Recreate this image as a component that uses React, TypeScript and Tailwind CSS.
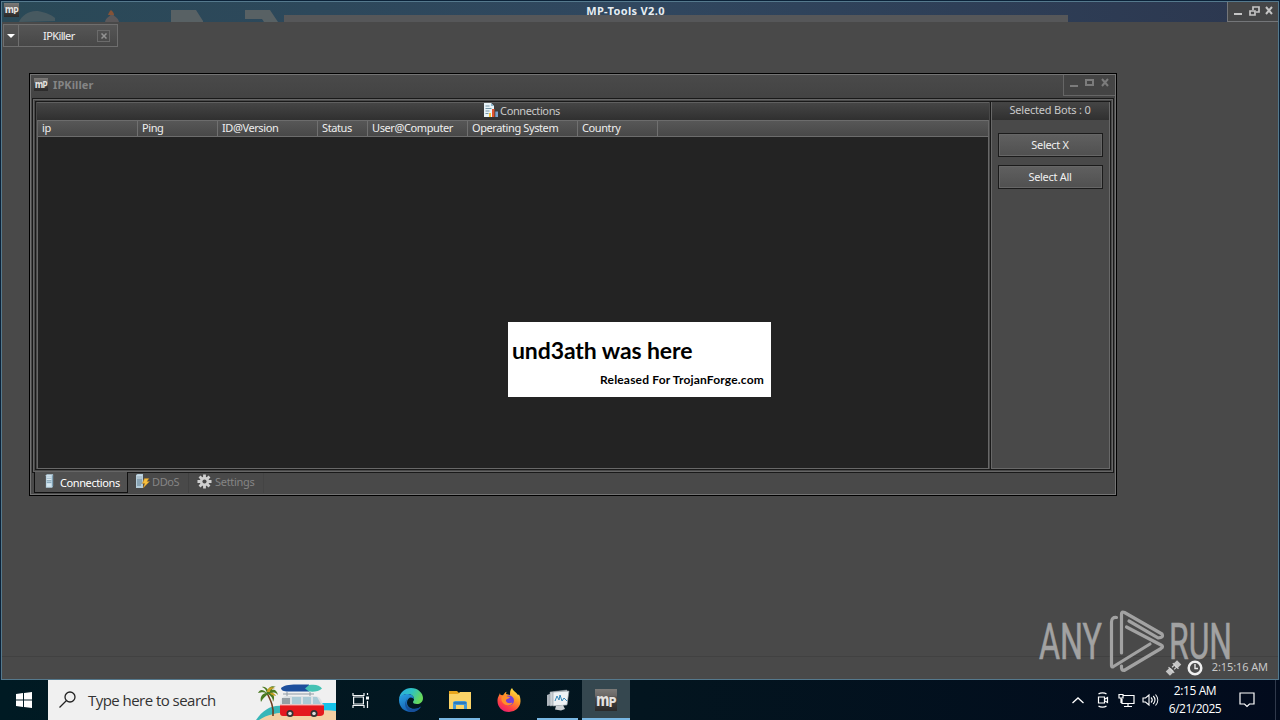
import React from "react";
import { clsx } from "clsx";

// Types
interface IconProps {
  className?: string;
}

interface Column {
  label: string;
  width: string;
}

const columns: Column[] = [
  { label: "ip", width: "w-[100px]" },
  { label: "Ping", width: "w-[80px]" },
  { label: "ID@Version", width: "w-[100px]" },
  { label: "Status", width: "w-[50px]" },
  { label: "User@Computer", width: "w-[100px]" },
  { label: "Operating System", width: "w-[110px]" },
  { label: "Country", width: "w-[80px]" },
];

// Icons
const MpIcon: React.FC<IconProps> = ({ className }) => (
  <svg viewBox="0 0 22 22" className={className} preserveAspectRatio="none">
    <defs>
      <linearGradient id="mp-bg" x1="0" y1="0" x2="0" y2="1">
        <stop offset="0" stopColor="#7c7a78" />
        <stop offset="0.3" stopColor="#6b6866" />
        <stop offset="0.42" stopColor="#464443" />
        <stop offset="1" stopColor="#2b2a2a" />
      </linearGradient>
    </defs>
    <rect width="22" height="22" fill="url(#mp-bg)" />
    <g fill="#e4e2e0" fontFamily="DejaVu Sans, sans-serif" fontWeight="bold">
      <text x="1" y="16.500" fontSize="17" textLength="13.500" lengthAdjust="spacingAndGlyphs">m</text>
      <text x="13.500" y="17.500" fontSize="13.500" textLength="8" lengthAdjust="spacingAndGlyphs">P</text>
    </g>
  </svg>
);

const ServerIcon: React.FC<IconProps> = ({ className }) => (
  <svg viewBox="0 0 10 15" className={className}>
    <path d="M1 1 2 0h7v13l-1 2H1z" fill="#b9d3e2" />
    <path d="M8 1h1v12l-1 1z" fill="#6f93a8" />
    <path d="M2 3h5M2 5h5M2 7h5M2 9h5" stroke="#6f8fa3" strokeWidth="0.8" />
    <path d="M2 2h5M2 4h5M2 6h5M2 11h5M2 13h5" stroke="#f4fbff" strokeWidth="0.9" />
  </svg>
);

const ChartIcon: React.FC<IconProps> = ({ className }) => (
  <svg viewBox="0 0 14 15" className={className}>
    <path d="M0 0h7l3 3v11H0z" fill="#e8f2f7" />
    <path d="M7 0v3h3z" fill="#8fb8cf" />
    <path d="M1.500 3h4M1.500 5.500h6M1.500 8h4M1.500 10.500h3" stroke="#7495a6" />
    <path d="M5 10h2v4H5z" fill="#f5c33b" />
    <path d="M8 6h2.500v8H8z" fill="#e0542f" />
    <path d="M11.300 8.500H14V14h-2.700z" fill="#7ba4cf" />
  </svg>
);

const DdosIcon: React.FC<IconProps> = ({ className }) => (
  <svg viewBox="0 0 15 15" className={className}>
    <path d="M1 1 2.500 0H8v14H1z" fill="#b3cbd9" />
    <path d="M2 3h5M2 5h5M2 7h5M2 9h5M2 11h4" stroke="#49677b" strokeWidth="0.8" />
    <path d="M2 2h5M2 4h5" stroke="#f0f8fc" strokeWidth="0.7" />
    <path d="M9.500 4.500h4.300l-1.800 3h2.500L8.200 14l1.500-4.500H7.300z" fill="#f7bf3c" stroke="#b88025" strokeWidth="0.5" />
  </svg>
);

const GearIcon: React.FC<IconProps> = ({ className }) => (
  <svg viewBox="0 0 16 16" className={className}>
    <g stroke="#cfcfcf" strokeWidth="3">
      <path d="M8 .5v15M.5 8h15M2.700 2.700l10.600 10.600M13.300 2.700 2.700 13.300" />
    </g>
    <circle cx="8" cy="8" r="5" fill="#cfcfcf" />
    <circle cx="8" cy="8" r="2.200" fill="#474747" />
  </svg>
);

const BeachVan: React.FC<IconProps> = ({ className }) => (
  <svg viewBox="0 0 80 40" className={className}>
    <path d="M0 40c7-10 15-15 26-14v14z" fill="#37b6b8" />
    <path d="M66 23h14v9H66z" fill="#16c3ea" />
    <path d="M3 40c10-7 26-9 44-7 12-2 22-4 33-2v9z" fill="#f3cfa3" />
    <path d="M11 13c4 8 7 14 6 23" stroke="#6d3b1d" strokeWidth="1.600" fill="none" />
    <path
      d="M11 13C7 9 4 9 2 13c4-1 6-1 8 0-5 1-6 5-5 9 2-4 5-6 7-8 3 2 5 4 5 8 2-4 1-7-1-9 3-1 4 0 6 2-1-4-3-6-6-5 1-3 2-3 4-3-4-2-7 0-8 3-1-2-4-4-6-3 3 1 4 3 5 6z"
      fill="#4b7a22"
    />
    <path d="M11 12c0-4 4-6 8-4-4 1-5 2-5 4zM14 13c3-1 5 1 6 3-3-1-5-1-6-3z" fill="#c7a124" />
    <path d="M25 8c3-3 10-4 20-3.500h8v7H32c-4 0-7-1-7-3.500z" fill="#1d4f9c" />
    <path d="M53 5c6-1 11 0 13 3.500-3 3-8 3.500-13 3l-4-3z" fill="#45c2b4" />
    <path d="M27 14h31M31 12v4M54 12v4" stroke="#8e9aa5" />
    <path d="M24 26c0-6 1-9 6-10h28c6 0 8 4 9 10v3H24z" fill="#dce2e5" />
    <path d="M26 18h8v6h-8zM36 17h9v7h-9zM47 17h8v7h-8zM57 17h4l4 7h-8z" fill="#a9cad6" />
    <path d="M26 18h8v6h-8z" fill="#949ea5" />
    <path d="M24 25h44v8c0 2-2 3-4 3H27c-2 0-3-1-3-3z" fill="#e4181e" />
    <path d="M24 25h44" stroke="#f6a5a1" />
    <circle cx="34" cy="33.500" r="3.500" fill="#333" />
    <circle cx="34" cy="33.500" r="1.800" fill="#ddd" />
    <circle cx="58" cy="33.500" r="3.500" fill="#333" />
    <circle cx="58" cy="33.500" r="1.800" fill="#ddd" />
  </svg>
);

const EdgeIcon: React.FC<IconProps> = ({ className }) => (
  <svg viewBox="0 0 24 24" className={className}>
    <defs>
      <linearGradient id="edge-top" x1="0" y1="0" x2="1" y2="0.4">
        <stop offset="0" stopColor="#29a9e8" />
        <stop offset="0.55" stopColor="#2fc3c0" />
        <stop offset="1" stopColor="#66d95b" />
      </linearGradient>
      <linearGradient id="edge-low" x1="0" y1="0" x2="0.6" y2="1">
        <stop offset="0" stopColor="#2ba4e4" />
        <stop offset="1" stopColor="#1057ac" />
      </linearGradient>
    </defs>
    <path d="M0 11C1 4 6 0 12 0c7 0 12 5 12 10 0 4-3 6-6 6-3 0-4-1-4-2s1-1 1-3c0-3-3-5-6-5-5 0-8 3-9 5z" fill="url(#edge-top)" />
    <path d="M0 12c0-4 4-6 9-6 4 0 6 3 6 5-1-1-2-1.500-3-1.500-2 0-4 2-4 5 0 5 5 7 9 6 2 0 3-1 5-2-2 3-5 5.500-10 5.500C5 24 0 19 0 12z" fill="url(#edge-low)" />
    <path d="M9 10c-3 4-2 9 3 11 4 1.500 8-1 10-2.500-2 3.500-5 5.500-10 5.500-6-2-8-9-3-14z" fill="#174f99" />
  </svg>
);

const ExplorerIcon: React.FC<IconProps> = ({ className }) => (
  <svg viewBox="0 0 22 20" className={className}>
    <path d="M0 1h8l2 2h12v5H0z" fill="#e9a61d" />
    <path d="M0 4h9l2-2h11v17H0z" fill="#fbd367" />
    <path d="M4 19v-7l2-1h10l2 1v7h-3v-4H7v4z" fill="#4598d4" />
    <path d="M5 12h12v2H5z" fill="#2b7ac0" />
  </svg>
);

const FirefoxIcon: React.FC<IconProps> = ({ className }) => (
  <svg viewBox="0 0 24 24" className={className}>
    <defs>
      <linearGradient id="fox" x1="0.8" y1="0" x2="0.25" y2="1">
        <stop offset="0" stopColor="#fff04a" />
        <stop offset="0.4" stopColor="#ff9926" />
        <stop offset="0.75" stopColor="#ff4045" />
        <stop offset="1" stopColor="#e81b73" />
      </linearGradient>
    </defs>
    <path d="M3 5c0 1 .5 2 1 2l2 .2c1-1.500 2-3 3.500-3.500L9 6l4 1c0-3 0-5 2-7 1 3 4 4 6 7l1-.5c1.500 3 1.500 5 1.500 7A11.500 11 0 0 1 12 24C5 24 .5 19 .5 13 .5 9 2 8 3 5z" fill="url(#fox)" />
    <circle cx="12" cy="12.500" r="5" fill="#7540d8" />
    <path d="M5 8c2-1 4-.5 5 .5 1 0 2 0 3 1-1 1-2 1-3 1.500-2 1-1 3 1 4 2 .5 3-.5 4.500 0-2 3-7 3-9.500 0C4 13 4 10 5 8z" fill="#ff8f2a" />
  </svg>
);

const MonitorIcon: React.FC<IconProps> = ({ className }) => (
  <svg viewBox="0 0 24 22" className={className}>
    <path d="m1 6 5-2 2 12-7 1z" fill="#aeb5bc" />
    <path d="m4 3 17-2v14L4 17z" fill="#ccd2d7" stroke="#8c959c" strokeWidth="0.5" />
    <path d="m7 3 16-1-2 14-14 1z" fill="#eef2f5" stroke="#8c959c" strokeWidth="0.6" />
    <path d="m9 12 2-5 2 4 1-5 2 6 2-3 3 3" fill="none" stroke="#3687b8" />
    <path d="m10 17 7-1 2 4-4 1.500-6-1z" fill="#cbd0d4" />
  </svg>
);

const TaskViewIcon: React.FC<IconProps> = ({ className }) => (
  <svg viewBox="0 0 17 17" className={className} fill="none" stroke="#f3f6f7" strokeWidth="1.200">
    <path d="M1 1v2.500h11V1M1 16v-2.500h11V16M1.600 5h9.800v7H1.600zM15.500 1v2M15.500 9v7" />
    <path d="M14 4.500h3v3h-3z" fill="#f3f6f7" stroke="none" />
  </svg>
);

const AnyRunLogo: React.FC<IconProps> = ({ className }) => (
  <svg viewBox="0 0 196 70" className={className}>
    <g fill="#a2a2a2" stroke="#a2a2a2" strokeWidth="0.6" fontFamily="Roboto, sans-serif" fontSize="50">
      <text x="1" y="51.500" textLength="63" lengthAdjust="spacingAndGlyphs">ANY</text>
      <text x="131" y="51.500" textLength="63" lengthAdjust="spacingAndGlyphs">RUN</text>
    </g>
    <g fill="none" stroke="#a2a2a2" strokeWidth="3.200" strokeLinecap="round" strokeLinejoin="round">
      <path d="M78.500 10.500Q73.500 10 73.500 15v43.500q0 2 2 1L112 37" />
      <path d="M83.500 46V7q0-3 3-1.500L124 27q2 4-4 3.800L91 14" />
      <path d="M88.500 20 123 38q3 1.500 0 3.500L86 63.500q-3 0-2.500-4.500" />
    </g>
  </svg>
);

// Window caption buttons
const CaptionButtons: React.FC<{ restore?: boolean; color: string }> = ({ restore, color }) => (
  <svg viewBox="0 0 40 12" className={clsx("h-3 w-10", color)} fill="none" stroke="currentColor" strokeWidth="2">
    <path d="M0 9h8M32 2l6 7M38 2l-6 7" />
    {restore ? (
      <path d="M16 6h5v4h-5zM19 5V2h6v5h-3" strokeWidth="1.700" />
    ) : (
      <path d="M16 3h7v5h-7z" />
    )}
  </svg>
);

const TitleBar: React.FC = () => (
  <header className="relative flex h-5 shrink-0 justify-between overflow-hidden bg-linear-to-r from-[#2a4957] via-[#30475f] to-[#2c374f]">
    {/* Desktop shapes that show through the glass */}
    <svg viewBox="0 0 1276 20" className="absolute inset-0 h-full w-full">
      <path d="M17 20c2-6 10-12 19-11 9 2 14 4 17 7v3z" fill="#475960" />
      <path d="M103 20c1-5 5-5 6-8h2c1 3 5 3 6 8z" fill="#5b585a" />
      <path d="M106 13c1-3 2-4 3-5 2 2 3 3 3 5z" fill="#855337" />
      <path d="M169 8h25l7 11v1h-32zM243 8h25l8 12h-14l-2-3h-17z" fill="#586164" />
      <path d="M282 13h784v7H282z" fill="#565759" />
    </svg>
    <MpIcon className="relative ml-[2px] mt-px h-[14px] w-[15px]" />
    <h1 className="relative ml-[5px] mt-px text-[11px] leading-4 font-bold tracking-[0.35px] text-[#e8edf0]">MP-Tools V2.0</h1>
    <div className="relative flex h-5 w-[51px] justify-end border-b border-l border-[#747679] bg-[#454647] pt-[3px] pr-1">
      <CaptionButtons restore color="text-[#c5c5c5]" />
    </div>
  </header>
);

const TabStrip: React.FC = () => (
  <nav className="ml-px mt-[2px] flex h-[23px] w-[115px] shrink-0 border border-[#6e6e6e] bg-linear-to-b from-[#565656] to-[#474747]">
    <div className="flex w-[15px] items-center justify-center border-r border-[#6e6e6e]">
      <svg viewBox="0 0 8 4" className="h-1 w-2"><path d="M0 0h8L4 4z" fill="#fff" /></svg>
    </div>
    <span className="ml-6 text-[11px] leading-[22px] tracking-[-0.6px] text-[#f0f0f0]">IPKiller</span>
    <span className="ml-auto mr-[7px] mt-[5px] flex h-3 w-[13px] items-center justify-center border border-[#6b6b6b]">
      <svg viewBox="0 0 6 6" className="h-[6px] w-[6px]"><path d="m.5.5 5 5m0-5-5 5" stroke="#949494" strokeWidth="1.500" /></svg>
    </span>
  </nav>
);

const PanelButton: React.FC<{ children: React.ReactNode }> = ({ children }) => (
  <button className="h-6 w-[105px] border border-[#1b1b1b] bg-linear-to-b from-[#606060] to-[#505050] pr-px text-[11px] leading-[20px] tracking-[-0.3px] text-[#f0f0f0] shadow-[inset_0_0_0_1px_#666]">
    {children}
  </button>
);

const IPKillerWindow: React.FC = () => (
  <section className="ml-[27px] mt-[26px] flex h-[423px] w-[1088px] shrink-0 flex-col border border-black bg-[#494949] shadow-[inset_0_0_0_1px_#747474]">
    <div className="flex h-6 shrink-0 justify-between bg-linear-to-b from-[#4a4a4a] to-[#434343] shadow-[inset_1px_1px_0_0_#747474,inset_-1px_0_0_0_#747474]">
      <div className="flex">
        <MpIcon className="ml-[4px] mt-[4px] h-[13px] w-[14px]" />
        <h2 className="ml-[5px] text-[11px] leading-[22px] font-bold tracking-[0.1px] text-[#858585]">IPKiller</h2>
      </div>
      <div className="mr-px mt-px flex h-[21px] w-[52px] justify-end border-b border-l border-[#666] bg-[#444] pt-[2px] pr-[5px]">
        <CaptionButtons color="text-[#7c7c7c]" />
      </div>
    </div>

    <div className="ml-[2px] flex h-[375px] w-[1082px] shrink-0 border border-[#191919] p-[2px] shadow-[inset_0_0_0_1px_#666]">
      <div className="flex w-full border border-[#191919]">
        {/* Connection list */}
        <div className="flex w-[954px] flex-col bg-[#484848] px-px">
          <div className="flex h-[18px] shrink-0 items-center justify-center border-t border-[#606060] bg-linear-to-b from-[#454545] to-[#303030] pb-[2px] pl-[18px]">
            <ChartIcon className="mr-[2px] h-[15px] w-[14px]" />
            <span className="text-[11px] leading-4 tracking-[-0.4px] text-[#c9c9c9]">Connections</span>
          </div>
          <div className="flex flex-1 flex-col border-x border-b border-[#686868]">
            <div className="flex h-[17px] shrink-0 border-y border-[#6c6c6c] bg-linear-to-b from-[#575757] to-[#484848]">
              {columns.map((column) => (
                <div
                  key={column.label}
                  className={clsx("shrink-0 border-r border-[#707070] pl-1 text-[11px] leading-[14px] tracking-[-0.4px] whitespace-nowrap text-[#eeeeee]", column.width)}
                >
                  {column.label}
                </div>
              ))}
            </div>
            <div className="flex-1 bg-[#232323] pl-[470px] pt-[185px]">
              <div className="h-[75px] w-[263px] bg-white px-1 pt-[14px] font-[Lato,sans-serif] font-bold text-black">
                <p className="text-[23px] leading-7 tracking-[-0.1px] whitespace-nowrap">und3ath was here</p>
                <p className="mt-[8px] pr-[3px] text-right text-[12px] leading-4 tracking-[0.17px] whitespace-nowrap">Released For TrojanForge.com</p>
              </div>
            </div>
          </div>
        </div>

        {/* Bot selection */}
        <aside className="flex flex-1 flex-col items-center border-l border-[#191919] shadow-[inset_1px_0_0_0_#686868,inset_-1px_-1px_0_0_#686868]">
          <div className="h-[18px] w-[117px] bg-linear-to-b from-[#454545] to-[#303030] pr-px text-center text-[11px] leading-4 tracking-[-0.2px] text-[#c9c9c9]">
            Selected Bots : 0
          </div>
          <div className="mt-[13px] flex flex-col gap-2">
            <PanelButton>Select X</PanelButton>
            <PanelButton>Select All</PanelButton>
          </div>
        </aside>
      </div>
    </div>

    <div className="ml-1 flex h-5 text-[11px] leading-5 tracking-[-0.4px] text-[#858585]">
      <div className="-mt-px flex h-[21px] w-[94px] items-center border-x border-b border-[#111] bg-[#505050] pt-px pl-[10px] text-white">
        <ServerIcon className="mr-[6px] mb-[3px] h-[14px] w-[9px]" />
        Connections
      </div>
      <div className="flex w-[61px] items-center border-r border-[#414141] pb-[2px] pl-[7px]">
        <DdosIcon className="mr-[2px] mb-px h-[15px] w-[15px]" />
        DDoS
      </div>
      <div className="flex w-[75px] items-center border-r border-[#444] pb-[2px] pl-2 tracking-[-0.3px]">
        <GearIcon className="mr-[3px] mb-[2px] h-[15px] w-[15px]" />
        Settings
      </div>
    </div>
  </section>
);

const StatusBar: React.FC = () => (
  <footer className="mt-auto flex h-[23px] shrink-0 items-center justify-end border-t border-[#414141] pr-[10px] pb-px text-[11px] text-[#c8c8c8]">
    <svg viewBox="0 0 16 16" className="mr-[5px] h-4 w-[17px]">
      <g fill="#c4c4c4" transform="rotate(45 8 8)">
        <path d="M5 0h6v4l-1 2H6L5 4zM6 10h4l1 2v4H5v-4z" />
        <path d="M4 5h8M4 11h8M6.500 6v2.500M9.500 6v2.500" stroke="#d5d5d5" strokeWidth="1.200" />
      </g>
    </svg>
    <svg viewBox="0 0 16 16" className="mr-[9px] h-4 w-4">
      <circle cx="8" cy="8" r="6.300" fill="#4b4b4b" stroke="#efefef" strokeWidth="2.500" />
      <path d="M8 4v4.500h3" fill="none" stroke="#e8e8e8" strokeWidth="1.400" />
    </svg>
    <span className="tracking-[-0.1px]">2:15:16 AM</span>
  </footer>
);

const TaskButton: React.FC<{ children: React.ReactNode; running?: boolean }> = ({ children, running }) => (
  <div className={clsx("mx-1 flex h-10 w-[41px] items-center justify-center border-b-2 pt-[2px]", running ? "border-[#78b7e3]" : "border-transparent")}>
    {children}
  </div>
);

const Taskbar: React.FC = () => (
  <div className="flex h-10 w-full bg-linear-to-r from-[#001a23] via-[#03151f] to-[#020b1d] font-['Open_Sans',sans-serif] text-white">
    <div className="flex w-12 items-center justify-center">
      <svg viewBox="0 0 16 16" className="h-4 w-4" fill="#fff">
        <path d="m0 2 7-1v6.500H0zM8 .9 16 0v7.500H8zM0 8.500h7V15l-7-1zM8 8.500h8V16l-8-1z" />
      </svg>
    </div>
    <div className="flex w-72 items-center bg-[#f0f0f0]">
      <svg viewBox="0 0 18 18" className="ml-[11px] h-[18px] w-[18px]" fill="none" stroke="#222" strokeWidth="1.300">
        <circle cx="11" cy="6" r="5" />
        <path d="m7.500 9.500-7 7" />
      </svg>
      <span className="ml-[11px] text-[15px] leading-5 tracking-[-0.54px] whitespace-nowrap text-[#333]">Type here to search</span>
      <BeachVan className="ml-auto h-10 w-20" />
    </div>
    <div className="flex w-12 items-center justify-center">
      <TaskViewIcon className="h-[17px] w-[17px]" />
    </div>
    <div className="ml-[2px] flex">
      <TaskButton><EdgeIcon className="h-6 w-6" /></TaskButton>
      <TaskButton running><ExplorerIcon className="h-5 w-[22px]" /></TaskButton>
      <TaskButton><FirefoxIcon className="h-6 w-6" /></TaskButton>
      <TaskButton running><MonitorIcon className="h-[22px] w-6" /></TaskButton>
      <div className="flex h-10 w-12 items-center justify-center border-b-2 border-[#78b7e3] bg-[#35474f] pt-[2px]">
        <MpIcon className="h-[22px] w-[22px]" />
      </div>
    </div>
    <div className="ml-auto flex items-center">
      <svg viewBox="0 0 12 7" className="mr-[12px] h-[7px] w-3" fill="none" stroke="#fff" strokeWidth="1.300"><path d="m.5 6 5.500-5 5.500 5" /></svg>
      <svg viewBox="0 0 13 16" className="mr-[9px] h-4 w-[13px]" fill="none" stroke="#fff" strokeWidth="1.200">
        <path d="M2.500 5h6v6h-6zM9 7l2.500-1.500v5L9 9M2.500 2c2-1.600 6-1.600 8 0M2.500 14c2 1.600 6 1.600 8 0" />
      </svg>
      <svg viewBox="0 0 17 15" className="mr-[7px] h-[15px] w-[17px]" fill="none" stroke="#fff" strokeWidth="1.200">
        <path d="M5 2.500h11v8H4V6M10 10.500v3M6 13.500h8M1 1.500h4V5H1zM3 5v5" />
      </svg>
      <svg viewBox="0 0 17 14" className="mr-[10px] h-[14px] w-[17px]" fill="none" stroke="#fff" strokeWidth="1.100">
        <path d="M1 5h2.500L7 2v10L3.500 9H1zM9 4.500c1.500 1.500 1.500 3.500 0 5M11.200 3c2.400 2.400 2.400 5.600 0 8M13.500 1.500c3 3.300 3 7.700 0 11" />
      </svg>
      <div className="w-[52px] text-center text-[12px] leading-[18px] whitespace-nowrap">
        <p className="tracking-[-0.4px]">2:15 AM</p>
        <p className="-mx-1 tracking-[-0.5px]">6/21/2025</p>
      </div>
      <svg viewBox="0 0 16 16" className="ml-[18px] mr-5 h-4 w-4" fill="none" stroke="#fff" strokeWidth="1.200">
        <path d="M1 1h14v11h-4.500L8 14.500 5.500 12H1z" />
      </svg>
      <div className="mr-1 h-10 w-px bg-[#30394b]" />
    </div>
  </div>
);

export default function App() {
  return (
    <div className="relative flex h-[720px] w-[1280px] flex-col overflow-hidden bg-[#0b2238] font-['Noto_Sans',sans-serif]">
      <main className="mx-px mt-px flex h-[679px] flex-col border border-[#55798d] bg-[#494949]">
        <TitleBar />
        <TabStrip />
        <IPKillerWindow />
        <StatusBar />
      </main>
      <Taskbar />
      <AnyRunLogo className="absolute top-[607px] left-[1038px] h-[70px] w-[196px] overflow-visible" />
    </div>
  );
}
